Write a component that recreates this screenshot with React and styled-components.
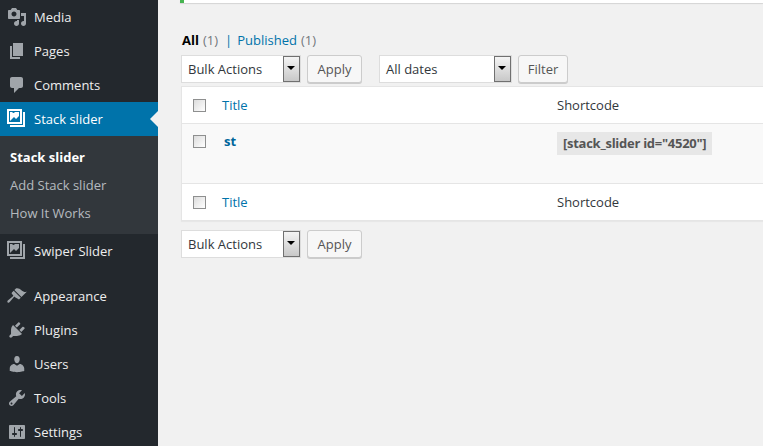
import React from 'react';
import styled, { createGlobalStyle } from 'styled-components';

const GlobalStyle = createGlobalStyle`
  html, body {
    margin: 0;
    height: 100%;
    overflow: hidden;
    background: #f1f1f1;
  }
  #root {
    height: 100%;
  }
  * {
    box-sizing: border-box;
  }
`;

const icons = {
  media: 'M13 11V4c0-.55-.45-1-1-1h-1.67L9 1H5L3.67 3H2c-.55 0-1 .45-1 1v7c0 .55.45 1 1 1h10c.55 0 1-.45 1-1zM7 4.5c1.38 0 2.5 1.12 2.5 2.5S8.38 9.5 7 9.5 4.5 8.38 4.5 7 5.62 4.5 7 4.5zM14 6h5v10.5c0 1.38-1.12 2.5-2.5 2.5S14 17.88 14 16.5s1.12-2.5 2.5-2.5c.17 0 .34.02.5.05V9h-3V6zm-4 8.05V13h2v3.5c0 1.38-1.12 2.5-2.5 2.5S7 17.88 7 16.5 8.12 14 9.5 14c.17 0 .34.02.5.05z',
  pages: 'M6 15V2h10v13H6zm-1 1h8v2H3V5h2v11z',
  comments: 'M5 2h9c1.1 0 2 .9 2 2v7c0 1.1-.9 2-2 2h-2l-5 5v-5H5c-1.1 0-2-.9-2-2V4c0-1.1.9-2 2-2z',
  slider: 'M0 0h15v15H0V0zm2 2v11h11V2H2zm1 1h2.2a1.4 1.4 0 0 0 2.6 0H12v4l-3 3-2-2-2 2-2 2V3zM16 3h2v15H3v-2h13V3z',
  appearance: 'M14.48 11.06L7.41 3.99l1.5-1.5c.5-.56 2.3-.47 3.51.32 1.21.8 1.43 1.28 2.91 2.1 1.18.64 2.45 1.26 4.45.85zm-.71.71L6.7 4.7 4.93 6.47c-.39.39-.39 1.02 0 1.41l1.06 1.06c.39.39.39 1.03 0 1.42l-5.2 4.2c-.6.5-.6 1.3-.1 1.9.5.5 1.3.5 1.8-.1l4.2-5.2c.39-.39 1.03-.39 1.42 0L12 13.54z',
  plugins: 'M13.11 4.36L9.87 7.6 8 5.73l3.24-3.24c.35-.34 1.05-.2 1.56.32.52.51.66 1.21.31 1.55zm-8 1.77l.91-1.12 9.01 9.01-1.19.84c-.71.71-2.63 1.16-3.82 1.16H6.14L4.9 17.26c-.59.59-1.54.59-2.12 0-.59-.58-.59-1.53 0-2.12l1.24-1.24v-3.88c0-1.13.4-3.19 1.09-3.89zm7.26 3.97l3.24-3.24c.34-.35 1.04-.21 1.55.31.52.51.66 1.21.31 1.55l-3.24 3.25z',
  users: 'M10 9.25c-2.27 0-2.73-3.44-2.73-3.44C7 4.02 7.82 2 9.97 2c2.16 0 2.98 2.02 2.71 3.81 0 0-.41 3.44-2.68 3.44zm0 2.57L12.72 10c2.39 0 4.52 2.33 4.52 4.53v2.49s-3.65 1.13-7.24 1.13c-3.65 0-7.24-1.13-7.24-1.13v-2.49c0-2.25 1.94-4.48 4.47-4.48z',
  tools: 'M16.68 9.77c-1.34 1.34-3.3 1.67-4.95.99l-5.41 6.52c-.99.99-2.59.99-3.58 0s-.99-2.59 0-3.57l6.52-5.42c-.68-1.65-.35-3.61.99-4.95 1.28-1.28 3.12-1.62 4.72-1.06l-2.89 2.89 2.82 2.82 2.86-2.87c.53 1.58.18 3.39-1.08 4.65zM3.81 16.21c.4.39 1.04.39 1.43 0 .4-.4.4-1.04 0-1.43-.39-.4-1.03-.4-1.43 0-.39.39-.39 1.03 0 1.43z',
  settings: 'M18 16V4c0-.55-.45-1-1-1H3c-.55 0-1 .45-1 1v12c0 .55.45 1 1 1h14c.55 0 1-.45 1-1zM8 11h1c.55 0 1 .45 1 1s-.45 1-1 1H8v1.5c0 .28-.22.5-.5.5s-.5-.22-.5-.5V13H6c-.55 0-1-.45-1-1s.45-1 1-1h1V5.5c0-.28.22-.5.5-.5s.5.22.5.5V11zm5-2h-1c-.55 0-1-.45-1-1s.45-1 1-1h1V5.5c0-.28.22-.5.5-.5s.5.22.5.5V7h1c.55 0 1 .45 1 1s-.45 1-1 1h-1v5.5c0 .28-.22.5-.5.5s-.5-.22-.5-.5V9z',
};

function MenuIcon({ name }) {
  return (
    <IconBox viewBox="0 0 20 20" aria-hidden="true">
      <path d={icons[name]} fillRule="evenodd" />
    </IconBox>
  );
}

function MenuLink({ icon, label, active }) {
  return (
    <MenuRow $active={active}>
      <MenuIcon name={icon} />
      <span>{label}</span>
      {active && <ActiveArrow />}
    </MenuRow>
  );
}

function FakeSelect({ label, width }) {
  return (
    <SelectBox $width={width}>
      <span>{label}</span>
      <SelectArrow />
    </SelectBox>
  );
}

function HeadRow() {
  return (
    <TableRow>
      <CheckCell>
        <Checkbox />
      </CheckCell>
      <TitleCell>
        <ColumnLink>Title</ColumnLink>
      </TitleCell>
      <ColumnName>Shortcode</ColumnName>
    </TableRow>
  );
}

export default function App() {
  return (
    <>
      <GlobalStyle />
      <Page>
        <Sidebar>
          <MenuLink icon="media" label="Media" />
          <MenuLink icon="pages" label="Pages" />
          <MenuLink icon="comments" label="Comments" />
          <MenuLink icon="slider" label="Stack slider" active />
          <SubMenu>
            <SubItem $current>Stack slider</SubItem>
            <SubItem>Add Stack slider</SubItem>
            <SubItem>How It Works</SubItem>
          </SubMenu>
          <MenuLink icon="slider" label="Swiper Slider" />
          <MenuSeparator />
          <MenuLink icon="appearance" label="Appearance" />
          <MenuLink icon="plugins" label="Plugins" />
          <MenuLink icon="users" label="Users" />
          <MenuLink icon="tools" label="Tools" />
          <MenuLink icon="settings" label="Settings" />
        </Sidebar>

        <Content>
          <Notice />
          <ViewFilters>
            <strong>All</strong>
            <Count>(1)</Count>
            <Divider>|</Divider>
            <ViewLink>Published</ViewLink>
            <Count>(1)</Count>
          </ViewFilters>

          <ActionBar>
            <FakeSelect label="Bulk Actions" width={120} />
            <ActionButton $width={55}>Apply</ActionButton>
            <FilterGroup>
              <FakeSelect label="All dates" width={133} />
              <ActionButton $width={50}>Filter</ActionButton>
            </FilterGroup>
          </ActionBar>

          <ListTable>
            <HeadRow />
            <DataRow>
              <CheckCell $nudge>
                <Checkbox />
              </CheckCell>
              <TitleCell>
                <RowTitle>st</RowTitle>
              </TitleCell>
              <ShortcodeCell>
                <Shortcode>[stack_slider id="4520"]</Shortcode>
              </ShortcodeCell>
            </DataRow>
            <HeadRow />
          </ListTable>

          <BottomBar>
            <FakeSelect label="Bulk Actions" width={120} />
            <ActionButton $width={55}>Apply</ActionButton>
          </BottomBar>
        </Content>
      </Page>
    </>
  );
}

const Page = styled.div`
  display: flex;
  width: 763px;
  height: 446px;
  overflow: hidden;
  font-family: 'Open Sans', 'Liberation Sans', sans-serif;
  font-size: 13px;
  color: #444;
  background: #f1f1f1;
`;

const Sidebar = styled.nav`
  flex: 0 0 158px;
  background: #23282d;
`;

const MenuRow = styled.div`
  position: relative;
  display: flex;
  align-items: center;
  height: 34px;
  padding-left: 7px;
  gap: 7px;
  font-size: 13px;
  color: ${(p) => (p.$active ? '#fff' : '#eee')};
  background: ${(p) => (p.$active ? '#0073aa' : 'transparent')};
  fill: ${(p) => (p.$active ? '#fff' : '#a0a5aa')};
`;

const IconBox = styled.svg`
  flex: 0 0 20px;
  width: 20px;
  height: 20px;
`;

const ActiveArrow = styled.i`
  position: absolute;
  right: 0;
  top: 9px;
  border: 8px solid transparent;
  border-left-width: 0;
  border-right-color: #f1f1f1;
`;

const SubMenu = styled.div`
  display: flex;
  flex-direction: column;
  padding: 7px 0;
  background: #32373c;
`;

const SubItem = styled.div`
  display: flex;
  align-items: center;
  height: 28px;
  padding-left: 10px;
  font-size: 13px;
  font-weight: ${(p) => (p.$current ? 700 : 400)};
  color: ${(p) => (p.$current ? '#fff' : 'rgba(240, 245, 250, 0.7)')};
`;

const MenuSeparator = styled.div`
  height: 11px;
`;

const Content = styled.main`
  flex: 1;
  min-width: 0;
  padding-left: 23px;
`;

const Notice = styled.div`
  height: 3px;
  margin-left: -1px;
  background: #fff;
  border-left: 4px solid #46b450;
  box-shadow: 0 1px 1px rgba(0, 0, 0, 0.12);
`;

const ViewFilters = styled.div`
  display: flex;
  align-items: center;
  gap: 4px;
  height: 18px;
  margin-top: 28px;
  padding-left: 1px;
  font-size: 13px;
  color: #666;

  strong {
    color: #000;
    font-weight: 700;
  }
`;

const Count = styled.span`
  color: #72777c;
`;

const Divider = styled.span`
  margin: 0 1px 0 3px;
  color: #0073aa;
`;

const ViewLink = styled.span`
  color: #0073aa;
`;

const ActionBar = styled.div`
  display: flex;
  align-items: center;
  gap: 6px;
  height: 28px;
  margin-top: 6px;
`;

const FilterGroup = styled.div`
  display: flex;
  align-items: center;
  gap: 6px;
  margin-left: 11px;
`;

const BottomBar = styled(ActionBar)`
  margin-top: 9px;
`;

const SelectBox = styled.div`
  position: relative;
  display: flex;
  align-items: center;
  width: ${(p) => p.$width}px;
  height: 28px;
  padding-left: 6px;
  font-size: 13px;
  color: #32373c;
  background: #fff;
  border: 1px solid #ddd;
`;

const SelectArrow = styled.i`
  position: absolute;
  top: 0;
  right: 0;
  width: 17px;
  height: 26px;
  background: linear-gradient(#f4f4f4, #c8c8c8);
  border: 1px solid #707070;

  &::after {
    content: '';
    position: absolute;
    top: 9px;
    left: 3px;
    border: 4px solid transparent;
    border-top: 4px solid #000;
    border-bottom-width: 0;
  }
`;

const ActionButton = styled.div`
  display: flex;
  align-items: center;
  justify-content: center;
  width: ${(p) => p.$width}px;
  height: 28px;
  font-size: 13px;
  color: #555;
  background: #f7f7f7;
  border: 1px solid #ccc;
  border-radius: 3px;
  box-shadow: 0 1px 0 #ccc;
`;

const ListTable = styled.div`
  width: 640px;
  margin-top: 3px;
  background: #fff;
  border: 1px solid #e5e5e5;
  border-right: 0;
  box-shadow: 0 1px 1px rgba(0, 0, 0, 0.04);
`;

const TableRow = styled.div`
  display: flex;
  align-items: center;
  height: 36px;
`;

const DataRow = styled.div`
  display: flex;
  align-items: flex-start;
  height: 61px;
  padding-top: 8px;
  background: #f9f9f9;
  border-top: 1px solid #e5e5e5;
  border-bottom: 1px solid #e5e5e5;
`;

const CheckCell = styled.div`
  display: flex;
  flex: 0 0 40px;
  padding-left: 11px;
  margin-top: ${(p) => (p.$nudge ? '3px' : '0')};
`;

const Checkbox = styled.i`
  display: block;
  width: 13px;
  height: 13px;
  background: linear-gradient(135deg, #dcdcdc, #fff);
  border: 1px solid #8e8f8f;
`;

const TitleCell = styled.div`
  flex: 0 0 335px;
`;

const ColumnLink = styled.span`
  font-size: 13px;
  color: #0073aa;
`;

const ColumnName = styled.span`
  font-size: 13px;
  color: #32373c;
`;

const RowTitle = styled.strong`
  margin-left: 2px;
  font-size: 13px;
  font-weight: 700;
  line-height: 18px;
  color: #00669b;
`;

const ShortcodeCell = styled.div`
  display: flex;
`;

const Shortcode = styled.code`
  display: block;
  height: 23px;
  padding: 0 6px;
  font-family: inherit;
  font-size: 13px;
  font-weight: 700;
  letter-spacing: -0.27px;
  line-height: 23px;
  color: #555;
  background: rgba(0, 0, 0, 0.07);
`;
